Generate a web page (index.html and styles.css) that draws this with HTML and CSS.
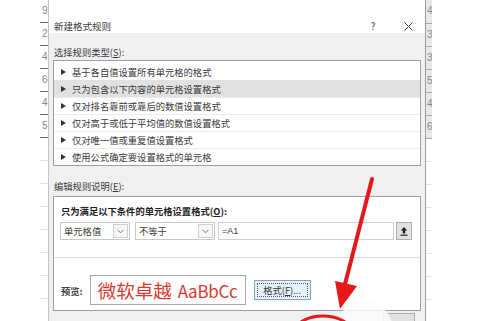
FILE: index.html
```html
<!DOCTYPE html>
<html lang="zh-CN">
<head>
  <meta charset="UTF-8">
  <title>新建格式规则</title>
  <link rel="stylesheet" href="styles.css">
</head>
<body>

<div class="screen">
  <div class="gutter"></div>

  <!-- sheet row headers behind the dialog -->
  <div class="heads heads-left">
    <div class="rh dark first">9</div>
    <div class="rh dark">2</div>
    <div class="rh dark">4</div>
    <div class="rh dark">6</div>
    <div class="rh dark">4</div>
    <div class="rh dark">5</div>
    <div class="rh"></div>
    <div class="rh"></div>
    <div class="rh"></div>
    <div class="rh"></div>
    <div class="rh"></div>
    <div class="rh"></div>
    <div class="rh"></div>
    <div class="rh"></div>
  </div>

  <div class="dialog">
    <div class="titlebar">
      <span class="title">新建格式规则</span>
      <span class="help">?</span>
      <span class="close">
        <svg width="9" height="9" viewBox="0 0 9 9"><path d="M0.5 0.5L8.5 8.5M8.5 0.5L0.5 8.5" stroke="#444" stroke-width="1" fill="none"/></svg>
      </span>
    </div>

    <div class="body">
      <div class="label">选择规则类型(<u>S</u>):</div>
      <ul class="rules">
        <li>基于各自值设置所有单元格的格式</li>
        <li class="selected">只为包含以下内容的单元格设置格式</li>
        <li>仅对排名靠前或靠后的数值设置格式</li>
        <li>仅对高于或低于平均值的数值设置格式</li>
        <li>仅对唯一值或重复值设置格式</li>
        <li>使用公式确定要设置格式的单元格</li>
      </ul>

      <div class="label label-edit">编辑规则说明(<u>E</u>):</div>
      <div class="editor">
        <div class="cond">
          <div class="cond-title">只为满足以下条件的单元格设置格式(<u>O</u>):</div>
          <div class="controls">
            <div class="select s1">
              <span>单元格值</span>
              <i class="caret"><svg width="7" height="5" viewBox="0 0 7 5"><path d="M0.5 0.8L3.5 3.8L6.5 0.8" stroke="#777" fill="none"/></svg></i>
            </div>
            <div class="select s2">
              <span>不等于</span>
              <i class="caret"><svg width="7" height="5" viewBox="0 0 7 5"><path d="M0.5 0.8L3.5 3.8L6.5 0.8" stroke="#777" fill="none"/></svg></i>
            </div>
            <div class="field">=A1</div>
            <div class="upload">
              <svg width="8" height="10" viewBox="0 0 8 10"><path d="M4 1L0.8 4.5H2.8V7.5H5.2V4.5H7.2Z" fill="#222"/><path d="M0.5 9.2H7.5" stroke="#222" stroke-width="1.2"/></svg>
            </div>
          </div>
        </div>
        <div class="preview-row">
          <span class="preview-label">预览:</span>
          <div class="preview">微软卓越<span class="latin">AaBbCc</span></div>
          <button class="btn-format"><span>格式(<u>F</u>)...</span></button>
        </div>
      </div>

      <div class="footer"><span class="btn"></span></div>
    </div>
  </div>

  <div class="heads heads-right">
    <div class="rh dark first">4</div>
    <div class="rh dark">3</div>
    <div class="rh dark">3</div>
    <div class="rh dark">5</div>
    <div class="rh dark">4</div>
    <div class="rh dark">6</div>
    <div class="rh"></div>
    <div class="rh"></div>
    <div class="rh"></div>
    <div class="rh"></div>
    <div class="rh"></div>
    <div class="rh"></div>
    <div class="rh"></div>
  </div>
</div>

<!-- red annotation drawn over the screenshot -->
<svg class="marks" width="499" height="321" viewBox="0 0 499 321">
  <circle cx="364" cy="330" r="29" fill="#fbfafa" opacity="0.85"/>
  <line x1="372" y1="179" x2="344" y2="288" stroke="#e5191c" stroke-width="4" stroke-linecap="round"/>
  <polygon points="335,281 357,286 340,309" fill="#e5191c"/>
  <ellipse cx="323" cy="333" rx="29" ry="17" fill="none" stroke="#e5191c" stroke-width="3"/>
</svg>

</body>
</html>
```

FILE: styles.css
```css
/* Base */
body {
  margin: 0;
  width: 499px;
  height: 321px;
  overflow: hidden;
  position: relative;
  background: #fff;
  font-family: "Noto Sans CJK SC", "Noto Sans", sans-serif;
  font-size: 9.3px;
  color: #3a3a3a;
}
u {
  text-decoration: underline;
}
.screen {
  display: flex;
  height: 321px;
}
.gutter {
  width: 40px;
  flex: none;
}

/* Sheet row headers */
.heads {
  flex: none;
  display: flex;
  flex-direction: column;
  overflow: hidden;
  font-family: "Liberation Sans", sans-serif;
  font-size: 10px;
  color: #888;
}
.heads-left {
  width: 8px;
}
.heads-right {
  width: 6px;
}
.rh {
  flex: none;
  height: 22px;
  line-height: 22px;
  padding-left: 2px;
  border-bottom: 1px solid #e2e2e2;
}
.rh.dark {
  border-bottom-color: #666;
}
.heads-right .rh {
  padding-left: 1px;
}
.heads-right .rh.dark {
  background: #e8e8e8;
  border-bottom-color: #aaa;
}
.heads-right .rh.first {
  height: 23px;
}

/* Dialog */
.dialog {
  flex: none;
  width: 376px;
  display: flex;
  flex-direction: column;
  background: #f0f0f0;
  border-left: 1px solid #c4c4c4;
  border-right: 1px solid #9d9d9d;
}
.titlebar {
  height: 37px;
  box-sizing: border-box;
  padding-top: 19px;
  background: #fff;
  display: flex;
  align-items: flex-start;
  line-height: 14px;
  font-size: 9.5px;
}
.title {
  flex: 1;
  padding-left: 5px;
}
.help {
  width: 36px;
  text-align: center;
  color: #444;
}
.close {
  width: 34px;
  height: 14px;
  display: flex;
  align-items: center;
  justify-content: center;
}
.body {
  padding: 0 4px;
}
.label {
  margin: 12px 0 1px 1px;
  line-height: 14px;
}
.label-edit {
  margin-top: 13px;
  margin-bottom: 3px;
}

/* Rule type list */
.rules {
  list-style: none;
  margin: 0;
  padding: 2px 0 0;
  background: #fff;
  border: 1px solid #a0a0a0;
}
.rules li {
  height: 17px;
  box-sizing: border-box;
  display: flex;
  align-items: center;
  padding-left: 7px;
  border-top: 1px solid #ececec;
}
.rules li:first-child {
  border-top-color: transparent;
}
.rules li::before {
  content: "";
  width: 0;
  height: 0;
  border-left: 5px solid #333;
  border-top: 3px solid transparent;
  border-bottom: 3px solid transparent;
  margin-right: 6px;
}
.rules li.selected {
  background: #e1e1e1;
  border-top-color: #e1e1e1;
}

/* Rule editor */
.editor {
  height: 115px;
  box-sizing: border-box;
  background: #fff;
  border: 1px solid #a0a0a0;
  display: flex;
  flex-direction: column;
}
.cond {
  padding: 7px 7px 17px;
  border-bottom: 1px solid #dcdcdc;
}
.cond-title {
  font-weight: bold;
  line-height: 14px;
  color: #222;
}
.controls {
  display: flex;
  height: 18px;
  margin: 4px 0 0 -1px;
}
.select {
  box-sizing: border-box;
  display: flex;
  align-items: center;
  padding-left: 3px;
  border: 1px solid #c8c8c8;
}
.select span {
  flex: 1;
}
.s1 {
  width: 70px;
}
.s2 {
  width: 80px;
  margin-left: 5px;
}
.caret {
  width: 15px;
  height: 14px;
  box-sizing: border-box;
  margin-right: 1px;
  display: flex;
  align-items: center;
  justify-content: center;
  background: #f6f6f6;
  border: 1px solid #cfcfcf;
}
.field {
  width: 176px;
  box-sizing: border-box;
  margin-left: 3px;
  padding-left: 3px;
  line-height: 16px;
  border: 1px solid #d0d0d0;
  font-family: "Liberation Sans", sans-serif;
  font-size: 9px;
}
.upload {
  width: 16px;
  box-sizing: border-box;
  margin-left: 2px;
  display: flex;
  align-items: center;
  justify-content: center;
  background: #e1e1e1;
  border: 1px solid #adadad;
}

/* Preview */
.preview-row {
  flex: 1;
  display: flex;
  align-items: flex-start;
  padding: 17px 7px 0;
}
.preview-label {
  margin-top: 9px;
  line-height: 14px;
  font-weight: bold;
  color: #444;
}
.preview {
  width: 156px;
  height: 30px;
  box-sizing: border-box;
  margin-left: 7px;
  padding-left: 7px;
  border: 1px solid #a8a8a8;
  color: #d6392f;
  font-size: 18.5px;
  line-height: 28px;
  white-space: nowrap;
  overflow: hidden;
}
.latin {
  margin-left: 6px;
  font-size: 17px;
  letter-spacing: -0.3px;
}
.btn-format {
  width: 57px;
  height: 20px;
  margin: 5px 0 0 8px;
  padding: 2px;
  box-sizing: border-box;
  background: #e5f1fb;
  border: 1px solid #7fa2c9;
  font: inherit;
  color: #333;
}
.btn-format span {
  display: block;
  height: 100%;
  box-sizing: border-box;
  border: 1px dotted #555;
  line-height: 12px;
}

.footer {
  display: flex;
  justify-content: flex-end;
  margin-top: 2px;
  padding-right: 6px;
}
.btn {
  width: 32px;
  height: 20px;
  box-sizing: border-box;
  background: #e1e1e1;
  border: 1px solid #adadad;
}

/* Annotation */
.marks {
  position: absolute;
  top: 0;
  left: 0;
  pointer-events: none;
}
```
